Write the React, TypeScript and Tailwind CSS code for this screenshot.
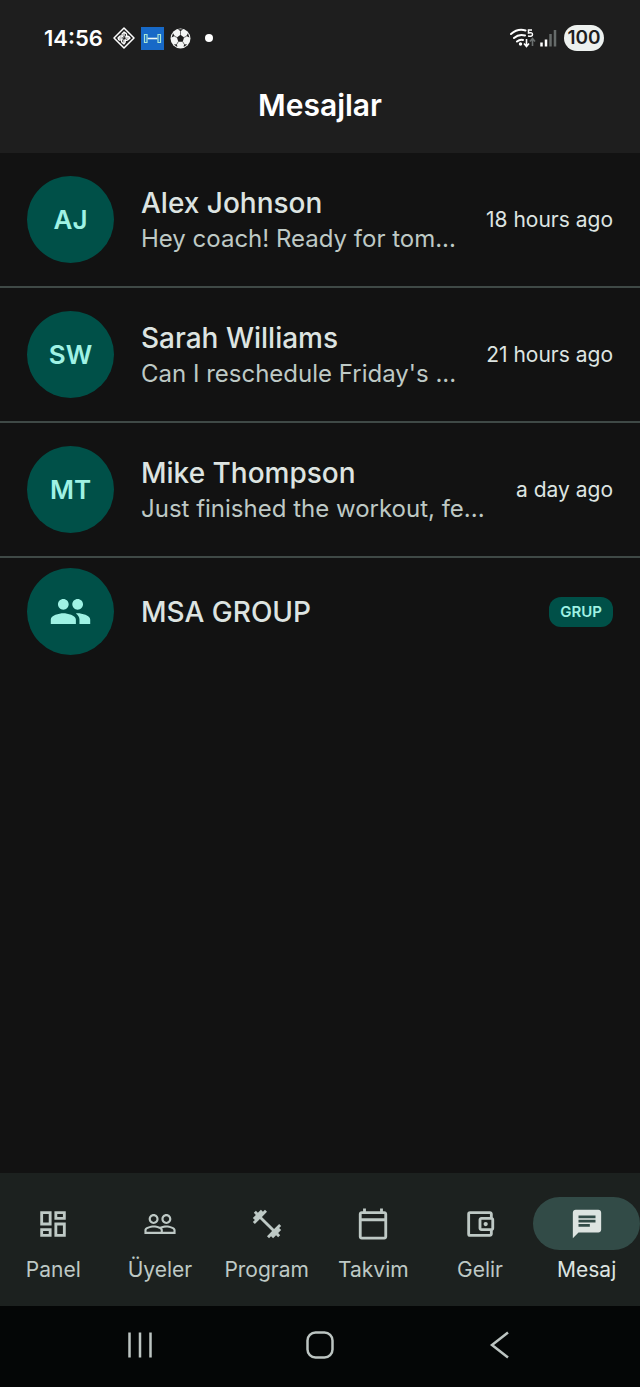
import React from 'react';
import {
  MdChat,
  MdFitnessCenter,
  MdOutlineAccountBalanceWallet,
  MdOutlineCalendarToday,
  MdOutlineDashboard,
  MdPeople,
  MdPeopleOutline,
} from 'react-icons/md';

const chats = [
  { initials: 'AJ', name: 'Alex Johnson', preview: 'Hey coach! Ready for tom...', time: '18 hours ago' },
  { initials: 'SW', name: 'Sarah Williams', preview: "Can I reschedule Friday's ...", time: '21 hours ago' },
  { initials: 'MT', name: 'Mike Thompson', preview: 'Just finished the workout, fe...', time: 'a day ago' },
];

const tabs = [
  { label: 'Panel', icon: MdOutlineDashboard },
  { label: 'Üyeler', icon: MdPeopleOutline },
  { label: 'Program', icon: MdFitnessCenter },
  { label: 'Takvim', icon: MdOutlineCalendarToday },
  { label: 'Gelir', icon: MdOutlineAccountBalanceWallet },
  { label: 'Mesaj', icon: MdChat, active: true },
];

function StatusBar() {
  return (
    <div className="flex h-[76px] items-center justify-between pl-11 pr-9 text-white">
      <div className="flex items-center gap-1.5">
        <span className="mr-1 text-[22px] font-semibold">14:56</span>
        <svg className="size-[22px]" viewBox="0 0 22 22" fill="none" stroke="currentColor">
          <path d="M11 1 21 11 11 21 1 11Z" strokeWidth="1.5" strokeLinejoin="round" />
          <path d="M11 4.5v5M11 12.5v5M4.5 11h5M12.5 11h5" strokeWidth="1.3" />
          <path d="M11 5.5q4 1 2 4 4-1 3.5 2-3 3-4.5 1 1 4-1.5 4-3-1.5-1.5-4-4 1.5-3.5-1.5 1-3 4-1.5-1.5-3 1.5-4Z" strokeWidth="1.3" />
        </svg>
        <svg className="size-[23px]" viewBox="0 0 23 23" fill="none">
          <rect width="23" height="23" fill="#1769c7" />
          <path d="M6.5 11.5h10" stroke="#eefaf7" strokeWidth="1.6" />
          <path d="M3.5 7.5h2.5v8h-2.5ZM17 7.5h2.5v8H17Z" stroke="#a9e6d5" strokeWidth="1.2" />
        </svg>
        <svg className="size-[21px]" viewBox="0 0 20 20">
          <circle cx="10" cy="10" r="9.5" fill="#f4f6f5" />
          <path
            d="M10 6.5 13.4 9 12.1 13H7.9L6.6 9ZM7.5 1.3h5L10 3.2ZM1.5 9 2.9 5l1.5 2.7ZM18.5 9 17.1 5l-1.5 2.7ZM3.6 15.8l3-.4.4 2.7ZM16.4 15.8l-3-.4-.4 2.7Z"
            fill="#1e1e1e"
          />
          <path
            d="M10 6.5V3M13.4 9l2.5-1.3M12.1 13l1.5 2.6M7.9 13l-1.5 2.6M6.6 9 4.1 7.7"
            stroke="#1e1e1e"
            strokeWidth="0.6"
          />
        </svg>
        <span className="ml-2 size-2 rounded-full bg-white" />
      </div>
      <div className="flex items-center gap-1.5">
        <svg className="h-5 w-12" viewBox="0 0 48 20" fill="none" stroke="currentColor">
          <path d="M1 6Q8 0 15.5 2.5M4 10Q9 5.5 15 7.5M7 13.5q3-2.5 6-1.5" strokeWidth="2" strokeLinecap="round" />
          <circle cx="10.5" cy="16" r="1.7" fill="currentColor" stroke="none" />
          <path d="M22 2h-3.5v3q4-1 4 1.5T18 8" strokeWidth="1.5" />
          <path d="M16.5 11v7.5M14 15.5l2.5 3 2.5-3" strokeWidth="1.6" />
          <path d="M22.5 18v-7.5M20 13.5l2.5-3 2.5 3" stroke="#6b7070" strokeWidth="1.6" />
          <path d="M31.5 18.5v-4M36 18.5v-7" strokeWidth="2.5" />
          <path d="M40.5 18.5V6M45 18.5V2" stroke="#666b6a" strokeWidth="2.5" />
        </svg>
        <span className="flex h-[26px] w-10 items-center justify-center rounded-full bg-[#edf1ef] text-[19px] font-semibold text-[#1e1e1e]">
          100
        </span>
      </div>
    </div>
  );
}

function Avatar({ children }: { children: React.ReactNode }) {
  return (
    <div className="flex size-[87px] shrink-0 items-center justify-center rounded-full bg-[#005048] text-[26px] leading-8 font-semibold text-[#9ff2e4]">
      {children}
    </div>
  );
}

export default function App() {
  return (
    <div className="flex min-h-screen flex-col bg-[#121212] font-[Inter,sans-serif] text-[#dde4e1]">
      <header className="bg-[#1e1e1e]">
        <StatusBar />
        <h1 className="h-[77px] pt-2 text-center text-[30px] leading-[42px] font-semibold text-white">Mesajlar</h1>
      </header>

      <main className="flex-1">
        <ul>
          {chats.map((chat) => (
            <li key={chat.initials} className="border-b-2 border-[#3f4946]">
              <a href="#" className="flex h-[133px] items-center px-[27px]">
                <Avatar>{chat.initials}</Avatar>
                <div className="ml-[27px] min-w-0 flex-1 pb-0.5 whitespace-nowrap">
                  <h2 className="text-[28px] leading-10 font-medium">{chat.name}</h2>
                  <p className="text-2xl leading-8 text-[#bec9c5]">{chat.preview}</p>
                </div>
                <time className="text-[21px] leading-8">{chat.time}</time>
              </a>
            </li>
          ))}
          <li>
            <a href="#" className="flex items-center px-[27px] py-[10px]">
              <Avatar>
                <MdPeople className="size-[43px]" />
              </Avatar>
              <h2 className="ml-[27px] flex-1 text-[28px] leading-10 font-medium">MSA GROUP</h2>
              <span className="flex h-[30px] items-center rounded-xl bg-[#005048] px-[11px] text-[15px] leading-7 font-semibold text-[#9ff2e4]">
                GRUP
              </span>
            </a>
          </li>
        </ul>
      </main>

      <nav className="grid h-[133px] grid-cols-6 bg-[#1c211f] pt-6">
        {tabs.map(({ label, icon: Icon, active }) => (
          <a
            key={label}
            href="#"
            aria-current={active ? 'page' : undefined}
            className={`flex flex-col items-center gap-1 ${active ? 'text-[#dde4e1]' : 'text-[#bec9c5]'}`}
          >
            <span className={`flex h-[53px] w-full items-center justify-center rounded-full ${active ? 'bg-[#324b47]' : ''}`}>
              <Icon className="size-[34px]" />
            </span>
            <span className="text-[21px] leading-8">{label}</span>
          </a>
        ))}
      </nav>

      <div className="flex h-[81px] items-center justify-between bg-[#040606] px-[120px] pb-1 text-[#bcc4c1]">
        <button aria-label="Recents" className="flex w-10 justify-center">
          <svg className="size-7" viewBox="0 0 28 28" stroke="currentColor" strokeWidth="2.5">
            <path d="M3.5 1.5v25M14 1.5v25M24.5 1.5v25" />
          </svg>
        </button>
        <button aria-label="Home" className="flex w-10 justify-center">
          <svg className="size-7" viewBox="0 0 28 28" fill="none" stroke="currentColor" strokeWidth="2.5">
            <rect x="1.5" y="1.5" width="25" height="25" rx="8" />
          </svg>
        </button>
        <button aria-label="Back" className="flex w-10 justify-center">
          <svg className="size-7" viewBox="0 0 28 28" fill="none" stroke="currentColor" strokeWidth="2.5">
            <path d="M22 1.5 6 14 22 26.5" />
          </svg>
        </button>
      </div>
    </div>
  );
}
